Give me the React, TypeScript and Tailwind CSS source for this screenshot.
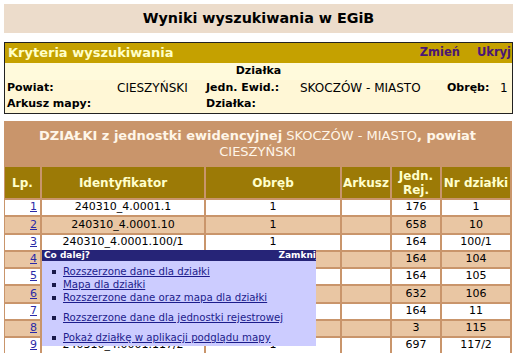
const rows: string[][] = [
  ["1", "240310_4.0001.1", "1", "", "176", "1"],
  ["2", "240310_4.0001.10", "1", "", "658", "10"],
  ["3", "240310_4.0001.100/1", "1", "", "164", "100/1"],
  ["4", "", "", "", "164", "104"],
  ["5", "", "", "", "164", "105"],
  ["6", "", "", "", "632", "106"],
  ["7", "", "", "", "164", "11"],
  ["8", "", "", "", "3", "115"],
  ["9", "240310_4.0001.117/2", "1", "", "697", "117/2"],
];

const headers = ["Lp.", "Identyfikator", "Obręb", "Arkusz", "Jedn. Rej.", "Nr działki"];

// rows 4-8 sit under the "Co dalej?" popup, so their covered cells stay empty
const menu = [
  { label: "Rozszerzone dane dla działki", gap: "" },
  { label: "Mapa dla działki", gap: "" },
  { label: "Rozszerzone dane oraz mapa dla działki", gap: "" },
  { label: "Rozszerzone dane dla jednostki rejestrowej", gap: "mt-[7px]" },
  { label: "Pokaż działkę w aplikacji podglądu mapy", gap: "mt-[7px]" },
];

function Popup() {
  return (
    <div className="absolute left-[42px] top-[250px] w-[274px] h-[96px] bg-[#ccccff] overflow-hidden">
      <div className="h-[11px] bg-[#262477] flex items-center justify-between pl-[2px] text-[9px] font-bold text-white leading-none">
        <span>Co dalej?</span>
        <span className="-mr-[3px]">Zamknij</span>
      </div>
      <ul className="pt-[4px] text-[10.2px] leading-[13px] text-[#1c1c8c]">
        {menu.map((m) => (
          <li key={m.label} className={`flex items-center ${m.gap}`}>
            <span className="ml-[10px] mr-[7px] w-[4px] h-[4px] bg-[#1a1a4a] shrink-0" />
            <a href="#" className="underline whitespace-nowrap">{m.label}</a>
          </li>
        ))}
      </ul>
    </div>
  );
}

export default function App() {
  return (
    <div className="relative min-h-[356px] overflow-hidden bg-white pt-[4px] font-['DejaVu_Sans',sans-serif] text-[11px] text-black">
      <div className="mx-[4px] h-[29px] bg-[#ecdccb] flex items-center justify-center text-[14.3px] font-bold">
        Wyniki wyszukiwania w EGiB
      </div>

      <div className="ml-[4px] mt-[9px] w-[509px] border border-[#222]">
        <div className="h-[20px] bg-[#c5a100] flex items-center pl-[3px] pr-[1px] text-[13px] font-bold text-[#ffffc8]">
          <span className="flex-1">Kryteria wyszukiwania</span>
          <span className="text-[11.5px] text-[#4a1675] mr-[17px]">Zmień</span>
          <span className="text-[11.5px] text-[#4a1675]">Ukryj</span>
        </div>
        <div className="bg-[#fff7d6] pb-[1px]">
          <div className="h-[17px] flex items-center justify-center font-bold bg-[#fffadc]">Działka</div>
          <div className="grid grid-cols-[107px_88px_96px_144px_54px_17px] auto-rows-[16px] items-center whitespace-nowrap">
            <span className="pl-[2px] font-bold">Powiat:</span>
            <span className="pl-[5px] text-[12px]">CIESZYŃSKI</span>
            <span className="pl-[6px] font-bold">Jedn. Ewid.:</span>
            <span className="pl-[4px] text-[12px]">SKOCZÓW - MIASTO</span>
            <span className="pl-[7px] font-bold">Obręb:</span>
            <span className="pl-[6px] text-[12px]">1</span>
            <span className="pl-[2px] font-bold">Arkusz mapy:</span>
            <span />
            <span className="pl-[6px] font-bold">Działka:</span>
            <span />
            <span />
            <span />
          </div>
        </div>
      </div>

      <div className="ml-[4px] mt-[7px] w-[508px] bg-[#c9956b] pl-[1px] pr-[2px]">
        <div className="h-[46px] flex flex-col items-center justify-center text-[13px] leading-[16px] text-[#fff6e8]">
          <div>
            <b>DZIAŁKI z jednostki ewidencyjnej</b> SKOCZÓW - MIASTO<b>, powiat</b>
          </div>
          <div>CIESZYŃSKI</div>
        </div>
        <div className="grid grid-cols-[35px_162px_134px_48px_48px_68px] gap-[2px]">
          {headers.map((h) => (
            <div
              key={h}
              className="h-[31px] bg-[#9c7a06] flex items-center justify-center text-center text-[12px] leading-[14px] font-bold text-[#ffffcc]"
            >
              {h === "Jedn. Rej." ? (
                <span>
                  Jedn.
                  <br />
                  Rej.
                </span>
              ) : (
                h
              )}
            </div>
          ))}
          {rows.map((r, i) => {
            const bg = i % 2 === 0 ? "bg-white" : "bg-[#e9c6a3]";
            return r.map((c, j) => (
              <div
                key={`${i}-${j}`}
                className={`h-[15.25px] ${bg} flex items-center ${j === 0 ? "justify-end pr-[3px]" : "justify-center"}`}
              >
                {j === 0 ? (
                  <a href="#" className="underline text-[#2a2aa8]">{c}</a>
                ) : (
                  c
                )}
              </div>
            ));
          })}
        </div>
      </div>

      <Popup />
    </div>
  );
}
